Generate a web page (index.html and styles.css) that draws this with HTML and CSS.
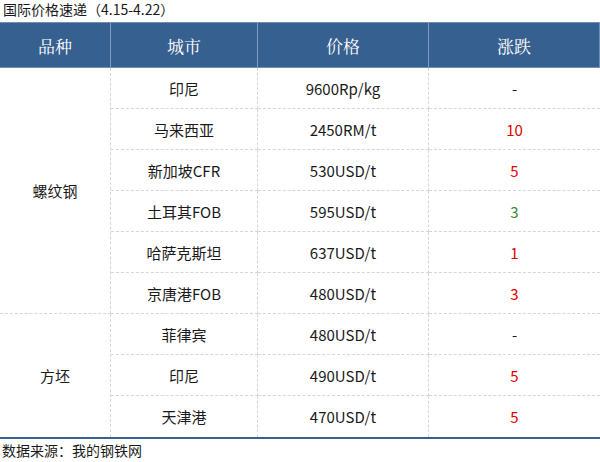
FILE: index.html
```html
<!DOCTYPE html>
<html lang="zh-CN">
<head>
<meta charset="utf-8">
<link rel="stylesheet" href="styles.css">
</head>
<body>
<div class="page">
  <div class="title">国际价格速递（4.15-4.22）</div>
  <div class="head">
    <div class="hc">品种</div>
    <div class="hc">城市</div>
    <div class="hc">价格</div>
    <div class="hc last">涨跌</div>
  </div>
  <div class="body">
    <div class="cat cat1">螺纹钢</div>
    <div class="c city">印尼</div><div class="c price">9600Rp/kg</div><div class="c chg">-</div>
    <div class="c city">马来西亚</div><div class="c price">2450RM/t</div><div class="c chg up">10</div>
    <div class="c city">新加坡CFR</div><div class="c price">530USD/t</div><div class="c chg up">5</div>
    <div class="c city">土耳其FOB</div><div class="c price">595USD/t</div><div class="c chg down">3</div>
    <div class="c city">哈萨克斯坦</div><div class="c price">637USD/t</div><div class="c chg up">1</div>
    <div class="c city">京唐港FOB</div><div class="c price">480USD/t</div><div class="c chg up">3</div>
    <div class="cat cat2">方坯</div>
    <div class="c city">菲律宾</div><div class="c price">480USD/t</div><div class="c chg">-</div>
    <div class="c city">印尼</div><div class="c price">490USD/t</div><div class="c chg up">5</div>
    <div class="c city end">天津港</div><div class="c price end">470USD/t</div><div class="c chg end up">5</div>
  </div>
  <div class="source">数据来源：我的钢铁网</div>
</div>
</body>
</html>
```

FILE: styles.css
```css
* { box-sizing: border-box; }
html, body { margin: 0; padding: 0; background: #fff; }
body {
  width: 600px;
  height: 462px;
  overflow: hidden;
  font-family: "Noto Sans CJK SC", "Noto Sans", sans-serif;
  color: #1a1a1a;
}
.page { width: 600px; }
.title {
  height: 22px;
  line-height: 19px;
  font-size: 14px;
  padding-left: 3px;
}
.head {
  display: grid;
  grid-template-columns: 111px 147px 171px 171px;
  height: 46px;
  background: #36608f;
  border-top: 1px solid #6f8fb8;
  border-bottom: 1px solid #6f8fb8;
}
.hc {
  display: flex;
  align-items: center;
  justify-content: center;
  color: #fff;
  font-family: "Noto Serif CJK SC", "Noto Sans CJK SC", serif;
  font-size: 17px;
  border-right: 1px solid #7f9dc4;
}
.hc.last { border-right: 1px solid #6f8fb8; }
.body {
  display: grid;
  grid-template-columns: 111px 147px 171px 171px;
  grid-auto-rows: 41px;
  border-bottom: 2px solid #36608f;
}
.c, .cat {
  display: flex;
  align-items: center;
  justify-content: center;
  font-size: 15px;
  border-bottom: 1px dashed #d6d6d6;
}
.cat { border-right: 1px dashed #d6d6d6; }
.cat1 { grid-row: 1 / span 6; grid-column: 1; }
.cat2 { grid-row: 7 / span 3; grid-column: 1; border-bottom: none; }
.city, .price { border-right: 1px dashed #d6d6d6; }
.c.end { border-bottom: none; }
.up { color: #e10000; }
.down { color: #3f8a30; }
.source {
  font-size: 14px;
  line-height: 20px;
  padding-left: 2px;
  padding-top: 1px;
}
```
